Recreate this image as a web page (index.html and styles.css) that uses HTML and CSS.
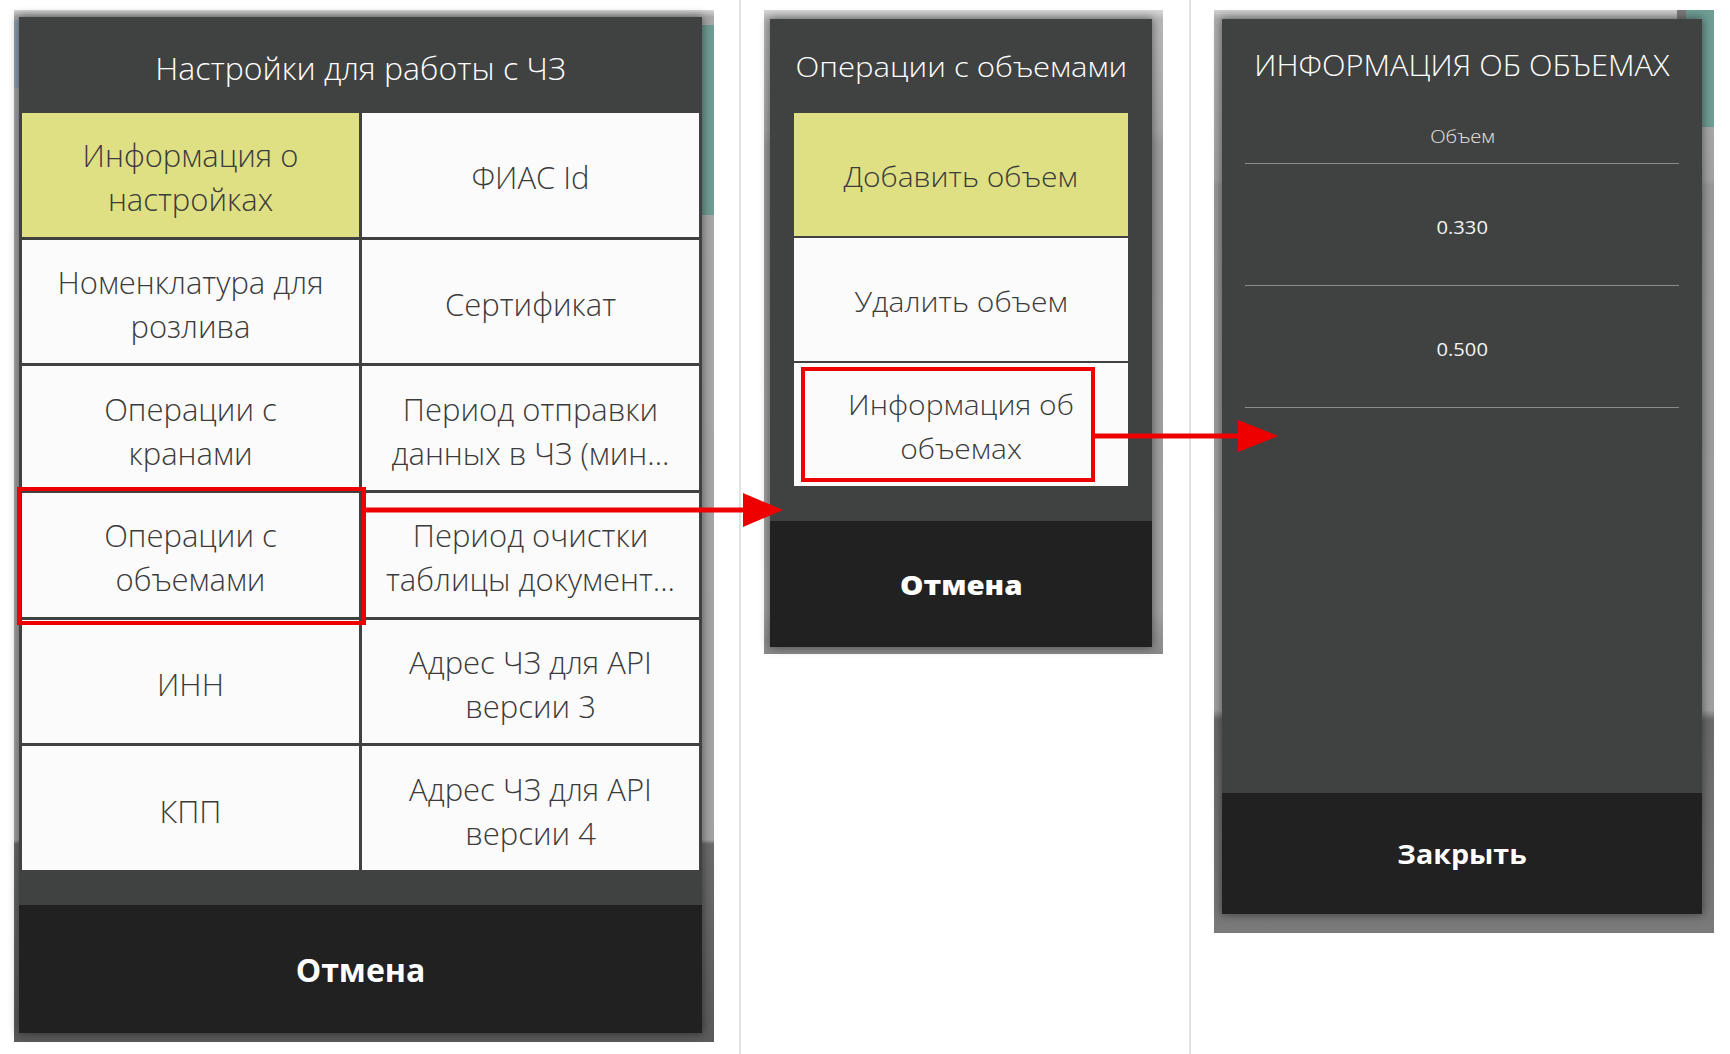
FILE: index.html
```html
<!DOCTYPE html>
<html lang="ru">
<head>
<meta charset="utf-8">
<title>Настройки для работы с ЧЗ</title>
<link rel="stylesheet" href="styles.css">
</head>
<body>
<div class="page">
  <section class="col col1">
    <div class="shot shot1">
      <div class="dialog">
        <div class="d1-title">Настройки для работы с ЧЗ</div>
        <div class="grid1">
          <div class="cell active">Информация о настройках</div>
          <div class="cell">ФИАС Id</div>
          <div class="cell">Номенклатура для розлива</div>
          <div class="cell">Сертификат</div>
          <div class="cell">Операции с кранами</div>
          <div class="cell">Период отправки данных в ЧЗ (мин...</div>
          <div class="cell">Операции с объемами</div>
          <div class="cell">Период очистки таблицы документ...</div>
          <div class="cell">ИНН</div>
          <div class="cell">Адрес ЧЗ для API версии 3</div>
          <div class="cell">КПП</div>
          <div class="cell">Адрес ЧЗ для API версии 4</div>
        </div>
        <div class="d-gap"></div>
        <div class="footer d1-footer">Отмена</div>
      </div>
    </div>
  </section>
  <div class="sep"></div>
  <section class="col col2">
    <div class="shot shot2">
      <div class="dialog">
        <div class="d2-title"><span class="sx">Операции с объемами</span></div>
        <div class="list2">
          <div class="item active"><span class="sx">Добавить объем</span></div>
          <div class="item"><span class="sx">Удалить объем</span></div>
          <div class="item"><span class="sx">Информация об объемах</span></div>
        </div>
        <div class="d-gap"></div>
        <div class="footer d2-footer"><span class="sxf">Отмена</span></div>
      </div>
    </div>
  </section>
  <div class="sep"></div>
  <section class="col col3">
    <div class="shot shot3">
      <div class="dialog">
        <div class="d3-title"><span class="sx3">ИНФОРМАЦИЯ ОБ ОБЪЕМАХ</span></div>
        <div class="table3">
          <div class="th"><span class="sx3">Объем</span></div>
          <div class="tr"><span class="sx3">0.330</span></div>
          <div class="tr"><span class="sx3">0.500</span></div>
        </div>
        <div class="d3-fill"></div>
        <div class="footer d3-footer"><span class="sx3">Закрыть</span></div>
      </div>
    </div>
  </section>
</div>
<svg class="annot" width="1730" height="1054" viewBox="0 0 1730 1054" aria-hidden="true">
  <rect x="19" y="489" width="345" height="134" fill="none" stroke="#ee0000" stroke-width="4"/>
  <rect x="366" y="507.5" width="379" height="5" fill="#ee0000"/>
  <polygon points="743,493 783,510 743,527" fill="#ee0000"/>
  <rect x="803" y="369" width="290" height="111" fill="none" stroke="#ee0000" stroke-width="4"/>
  <rect x="1095" y="433.5" width="147" height="5" fill="#ee0000"/>
  <polygon points="1238,420 1278,436 1238,452" fill="#ee0000"/>
</svg>
</body>
</html>
```

FILE: styles.css
```css
* { box-sizing: border-box; }
html, body { margin: 0; padding: 0; }
body {
  width: 1730px;
  height: 1054px;
  background: #ffffff;
  font-family: "Open Sans", "Noto Sans", "DejaVu Sans", sans-serif;
  position: relative;
  overflow: hidden;
}
.page { display: flex; height: 1054px; }
.col1 { width: 739px; }
.col2 { width: 448px; }
.col3 { flex: 1; }
.sep { width: 2px; background: #e2e2e2; }

.shot { display: flex; }
.shot1 {
  margin: 10px 0 0 14px;
  width: 700px;
  height: 1032px;
  padding: 7px 12px 9px 5px;
  background:
    linear-gradient(#6f9d94, #6f9d94) right 0 top 15px / 12px 190px no-repeat,
    linear-gradient(#8fa3b3, #8fa3b3) left 0 top 10px / 5px 68px no-repeat,
    linear-gradient(to bottom, #d6d6d6 0, #a9a9a9 7px, #a4a4a4 830px, #6c6c6c 834px, #5b5b5b 100%);
}
.shot2 {
  margin: 10px 0 0 23px;
  width: 399px;
  height: 644px;
  padding: 9px 11px 7px 6px;
  background: linear-gradient(to bottom, #d8d8d8 0, #b9b9b9 9px, #a8a8a8 120px, #9c9c9c 135px, #a3a3a3 600px, #8a8a8a 100%);
}
.shot3 {
  margin: 10px 0 0 23px;
  width: 500px;
  height: 923px;
  padding: 9px 12px 19px 8px;
  background:
    linear-gradient(#6f9d94, #6f9d94) right 0 top 0 / 28px 117px no-repeat,
    linear-gradient(#7a7a7a, #7a7a7a) right 28px top 0 / 9px 9px no-repeat,
    linear-gradient(to bottom, #d2d2d2 0, #b0b0b0 9px, #a3a3a3 170px, #9a9a9a 175px, #a2a2a2 700px, #6a6a6a 710px, #7a7a7a 100%);
}

.dialog {
  flex: 1;
  display: flex;
  flex-direction: column;
  background: #404241;
  box-shadow: 0 0 9px 1px rgba(0, 0, 0, 0.45);
}
.d-gap { height: 35px; }
.footer {
  background: #212121;
  color: #ffffff;
  font-weight: 700;
  display: flex;
  align-items: center;
  justify-content: center;
}

/* dialog 1 */
.d1-title {
  height: 96px;
  padding-top: 4px;
  display: flex;
  align-items: center;
  justify-content: center;
  color: #ffffff;
  font-size: 32px;
  font-weight: 300;
}
.grid1 {
  height: 757px;
  padding: 0 3px;
  display: grid;
  grid-template-columns: 1fr 1fr;
  grid-template-rows: repeat(6, 1fr);
  gap: 3px;
}
.cell {
  background: #fbfbfb;
  color: #3b3b3b;
  display: flex;
  align-items: center;
  justify-content: center;
  text-align: center;
  font-size: 31px;
  font-weight: 300;
  line-height: 44px;
  padding: 5px 24px 0;
}
.active { background: #dfe084; }
.d1-footer { flex: 1; font-size: 32px; }

/* dialog 2 */
.sx { display: inline-block; transform: scaleX(1.11); }
.sxf { display: inline-block; transform: scaleX(1.09); }
.d2-title {
  height: 94px;
  display: flex;
  align-items: center;
  justify-content: center;
  color: #ffffff;
  font-size: 28px;
  font-weight: 300;
}
.list2 {
  display: flex;
  flex-direction: column;
  gap: 2px;
  padding: 0 24px;
}
.item {
  height: 123px;
  background: #fbfbfb;
  color: #3b3b3b;
  display: flex;
  align-items: center;
  justify-content: center;
  text-align: center;
  font-size: 27px;
  font-weight: 300;
  line-height: 44px;
  padding: 4px 40px 0;
}
.item.active { background: #dfe084; }
.d2-footer { flex: 1; font-size: 27px; font-weight: 800; }

/* dialog 3 */
.sx3 { display: inline-block; transform: scaleX(1.06); }
.d3-title {
  height: 90px;
  display: flex;
  align-items: center;
  justify-content: center;
  color: #ffffff;
  font-size: 29px;
  font-weight: 300;
}
.table3 { padding: 0 23px; }
.th {
  height: 55px;
  display: flex;
  align-items: center;
  justify-content: center;
  border-bottom: 1px solid #8c8c8c;
  color: #e4e4e4;
  font-size: 19px;
  font-weight: 300;
}
.tr {
  height: 122px;
  padding-top: 5px;
  display: flex;
  align-items: center;
  justify-content: center;
  border-bottom: 1px solid #8c8c8c;
  color: #f4f4f4;
  font-size: 19px;
}
.d3-fill { flex: 1; }
.d3-footer { height: 121px; font-size: 27px; }

.annot {
  position: absolute;
  left: 0;
  top: 0;
  pointer-events: none;
}
```
